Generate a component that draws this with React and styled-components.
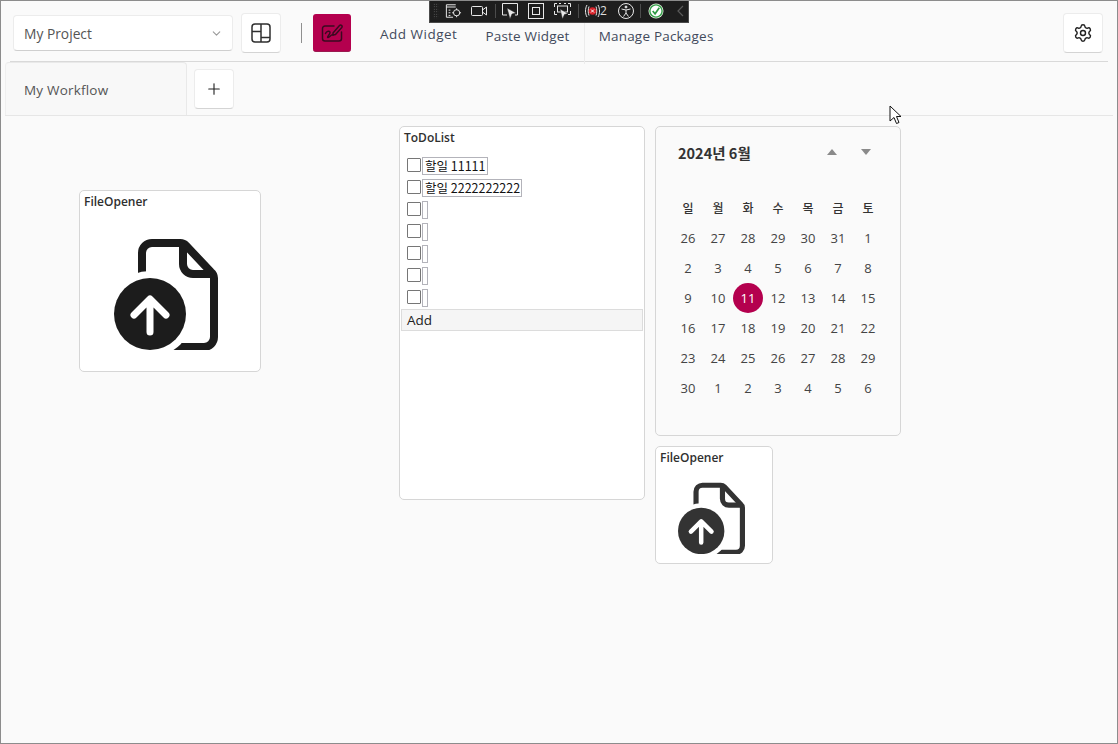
import styled, { createGlobalStyle } from "styled-components";
import { ChevronDown, Plus, Settings } from "lucide-react";

const GlobalStyle = createGlobalStyle`
  html, body {
    margin: 0;
    padding: 0;
    background: #fafafa;
  }
  * {
    box-sizing: border-box;
  }
`;

const FONT = `"Open Sans", "Noto Sans CJK KR", sans-serif`;
const PINK = "#b4004e";

const Page = styled.div`
  position: relative;
  width: 1118px;
  height: 744px;
  overflow: hidden;
  background: #fafafa;
  border: 1px solid #8c8c8c;
  font-family: ${FONT};
  color: #333;
`;

const Toolbar = styled.div`
  display: flex;
  align-items: flex-start;
  height: 61px;
  margin: 0 9px;
  padding: 12px 5px 0 3px;
  border-bottom: 1px solid #d9d9d9;
`;

const ProjectSelect = styled.div`
  display: flex;
  align-items: center;
  justify-content: space-between;
  width: 220px;
  height: 36px;
  margin-top: 2px;
  padding: 1px 9px 0 10px;
  background: #fff;
  border: 1px solid #ececec;
  border-bottom-color: #cfcfcf;
  border-radius: 4px;
  font-size: 13.8px;
  color: #555;
`;

const IconButton = styled.div`
  display: flex;
  align-items: center;
  justify-content: center;
  flex: none;
  width: 40px;
  height: 40px;
  margin-left: ${(p) => p.$ml || 0}px;
  background: #fff;
  border: 1px solid #ececec;
  border-bottom-color: #d4d4d4;
  border-radius: 4px;
  color: #222;
`;

const Separator = styled.div`
  width: 1px;
  height: 20px;
  margin: 10px 11px 0 20px;
  background: #8f8f8f;
`;

const PinkButton = styled.div`
  display: flex;
  align-items: center;
  justify-content: center;
  width: 38px;
  height: 38px;
  margin-top: 1px;
  background: ${PINK};
  border-radius: 3px;
  border-bottom: 1px solid #9a1a50;
`;

const MenuItem = styled.div`
  margin-left: ${(p) => p.$ml}px;
  padding-top: ${(p) => p.$top}px;
  font-size: 13.5px;
  line-height: 20px;
  letter-spacing: ${(p) => p.$ls || 0.2}px;
  color: #424a5c;
  white-space: nowrap;
`;

const MenuDivider = styled.div`
  width: 1px;
  height: 42px;
  margin: 9px 0 0 14px;
  background: #ececec;
`;

const Spacer = styled.div`
  flex: 1;
`;

const TabBar = styled.div`
  display: flex;
  align-items: flex-start;
  height: 54px;
  margin: 0 4px;
  border-bottom: 1px solid #e6e6e6;
`;

const Tab = styled.div`
  display: flex;
  align-items: center;
  width: 182px;
  height: 53px;
  padding: 2px 18px 0;
  background: #f8f8f8;
  border: 1px solid #e9e9e9;
  border-bottom: 0;
  border-radius: 4px 4px 0 0;
  border-left-color: #efefef;
  font-size: 13.5px;
  letter-spacing: 0.2px;
  color: #555;
`;

const PlusButton = styled(IconButton)`
  margin-top: 7px;
  margin-left: 7px;
`;

const Canvas = styled.div`
  position: relative;
  height: 627px;
`;

/* widgets sit on a free canvas, so their place is the content */
const Widget = styled.div`
  position: absolute;
  left: ${(p) => p.$x}px;
  top: ${(p) => p.$y}px;
  width: ${(p) => p.$w}px;
  height: ${(p) => p.$h}px;
  background: ${(p) => p.$bg || "#fff"};
  border: 1px solid #d6d6d6;
  border-radius: 5px;
`;

const WidgetTitle = styled.div`
  padding: 3px 0 0 4px;
  font-size: 12px;
  line-height: 16px;
  font-weight: 600;
  color: #2f2f2f;
`;

const IconWrap = styled.div`
  display: flex;
  padding: ${(p) => p.$pad};
  color: ${(p) => p.$color};
`;

const TodoList = styled.div`
  display: flex;
  flex-direction: column;
  gap: 4px;
  padding: 11px 0 0 7px;
`;

const TodoRow = styled.div`
  display: flex;
  align-items: flex-start;
  height: 18px;
`;

const CheckBox = styled.div`
  flex: none;
  width: 14px;
  height: 14px;
  margin: 1px 1px 0 0;
  background: #fff;
  border: 1px solid #767676;
  border-radius: 1px;
`;

const TodoInput = styled.div`
  height: 18px;
  min-width: 6px;
  padding: 0 1px 0 2px;
  border: 1px solid #b3b3ba;
  font-family: "Noto Sans CJK KR", "Open Sans", sans-serif;
  font-size: 12.5px;
  line-height: 16px;
  color: #111;
  white-space: nowrap;
`;

const AddButton = styled.div`
  height: 22px;
  margin: 2px 1px 0 1px;
  padding-left: 5px;
  background: #f5f5f5;
  border: 1px solid #dcdcdc;
  font-size: 13.5px;
  line-height: 20px;
  color: #222;
`;

const CalHeader = styled.div`
  display: flex;
  align-items: center;
  height: 20px;
  margin: 15px 0 0 22px;
  font-family: "Noto Sans CJK KR", "Open Sans", sans-serif;
  font-size: 14.5px;
  font-weight: 700;
  color: #333;
`;

const CalNav = styled.div`
  display: flex;
  gap: 24px;
  margin-left: 76px;
`;

const Triangle = styled.div`
  width: 0;
  height: 0;
  border-left: 5px solid transparent;
  border-right: 5px solid transparent;
  ${(p) => (p.$up ? "border-bottom" : "border-top")}: 6px solid #8a8a8a;
`;

const CalGrid = styled.div`
  display: grid;
  grid-template-columns: repeat(7, 30px);
  grid-auto-rows: 30px;
  margin: 31px 0 0 17px;
`;

const DayHead = styled.div`
  display: flex;
  align-items: center;
  justify-content: center;
  padding-bottom: 2px;
  font-family: "Noto Sans CJK KR", "Open Sans", sans-serif;
  font-size: 12px;
  font-weight: 500;
  color: #333;
`;

const Day = styled.div`
  display: flex;
  align-items: center;
  justify-content: center;
  font-size: 13px;
  color: ${(p) => (p.$on ? "#fff" : "#444")};
  background: ${(p) => (p.$on ? PINK : "transparent")};
  border-radius: 50%;
`;

/* remote debug bar floating on top of the app */
const DebugBar = styled.div`
  position: absolute;
  left: 428px;
  top: -1px;
  display: flex;
  align-items: center;
  width: 260px;
  height: 23px;
  background: #1e1e1e;
  border: 1px solid #4a4a4a;
  border-top: 0;
  color: #e8e8e8;
`;

const Grip = styled.div`
  flex: none;
  width: 6px;
  height: 16px;
  margin: 0 6px 0 3px;
  background: radial-gradient(circle, #6a6a6a 0.6px, transparent 0.8px) 0 0 / 2.5px 2.5px;
`;

const DebugIcon = styled.svg`
  display: block;
  flex: none;
  margin-left: ${(p) => p.$ml || 0}px;
`;

const DebugSep = styled.div`
  flex: none;
  width: 1px;
  height: 14px;
  margin: 0 ${(p) => p.$mr}px 0 ${(p) => p.$ml}px;
  background: #4c4c4c;
`;

const DebugCount = styled.span`
  flex: none;
  font-size: 12px;
  line-height: 1;
  color: #ddd;
`;

const Cursor = styled.svg`
  position: absolute;
  left: 888px;
  top: 104px;
`;

const FileUpIcon = ({ size }) => (
  <svg width={size} height={size * 1.077} viewBox="0 0 104 112" fill="none">
    <path
      d="M28 42V15a10 10 0 0 1 10-10h28a8 8 0 0 1 6 2.500l25 26.500a8 8 0 0 1 3 6v59a10 10 0 0 1-10 10H56"
      stroke="currentColor"
      strokeWidth="8"
      strokeLinejoin="round"
    />
    <path
      d="M69 5v21a10 10 0 0 0 10 10h21"
      stroke="currentColor"
      strokeWidth="8"
    />
    <circle cx="36" cy="76" r="43" fill="#fff" />
    <circle cx="36" cy="76" r="36" fill="currentColor" />
    <path
      d="M36 94V62M20 77l16-16 16 16"
      stroke="#fff"
      strokeWidth="7"
      strokeLinecap="round"
      strokeLinejoin="round"
    />
  </svg>
);

const LayoutIcon = () => (
  <svg width="20" height="20" viewBox="0 0 20 20" fill="none" stroke="#2f2f2f" strokeWidth="1.5">
    <rect x="1" y="1" width="18" height="18" rx="3" />
    <path d="M10 1v18M1 8.500h9M10 14.500h9" />
  </svg>
);

const PenBoardIcon = () => (
  <svg width="22" height="20" viewBox="0 0 22 20" fill="none" stroke="#3a0a20" strokeWidth="1.5" strokeLinecap="round" strokeLinejoin="round">
    <path d="M13 3H4a2.500 2.500 0 0 0-2.500 2.500v10A2.500 2.500 0 0 0 4 18h14a2.500 2.500 0 0 0 2.500-2.500V9" />
    <path d="M12 10l6.500-7.500a1.500 1.500 0 0 1 2.300 1.900L14.500 11.500 12 12z" />
    <path d="M4.500 10.500c1-2.500 4.500-3 4.500-1s-3.500 4.500-2 5 3-3.500 5-2.500" />
  </svg>
);

const InspectIcon = () => (
  <DebugIcon width="17" height="16" viewBox="0 0 19 18" fill="none" stroke="#e8e8e8" strokeWidth="1.100">
    <path d="M12 2H1.500v14H9M1.500 4.500H12" />
    <path d="M4 8h2M4 11h2M4 14h2" />
    <circle cx="13" cy="11" r="3.500" />
    <path d="M13 6v2M13 14v2M8 11h2M16 11h2" />
  </DebugIcon>
);

const CameraIcon = () => (
  <DebugIcon $ml={9} width="17" height="12" viewBox="0 0 17 12" fill="none" stroke="#e8e8e8" strokeWidth="1">
    <rect x="0.500" y="1.500" width="11" height="9" rx="1" />
    <path d="M11.500 5l4-3v8l-4-3" />
  </DebugIcon>
);

const SelectIcon = () => (
  <DebugIcon width="16" height="17" viewBox="0 0 16 17" fill="none">
    <path d="M5 12H.5V.5h15V12H13" stroke="#e8e8e8" />
    <path d="M5 5l9 5-4 1-2 5z" fill="#e8e8e8" stroke="#1e1e1e" strokeWidth="0.500" />
  </DebugIcon>
);

const FrameIcon = () => (
  <DebugIcon $ml={10} width="16" height="16" viewBox="0 0 16 16" fill="none" stroke="#e8e8e8">
    <rect x="0.500" y="0.500" width="15" height="15" />
    <rect x="4.500" y="4.500" width="7" height="7" />
  </DebugIcon>
);

const ScanIcon = () => (
  <DebugIcon $ml={10} width="17" height="17" viewBox="0 0 17 17" fill="none">
    <path d="M3 .5H.5V4M14 .5h2.500V4M.5 8v3.500H3M16.500 8v3.500H14M5 .5h2M10 .5h2" stroke="#e8e8e8" />
    <rect x="3.500" y="3" width="10" height="6" stroke="#e8e8e8" />
    <path d="M6 6l8 4.500-3.500 1-2 4.500z" fill="#e8e8e8" stroke="#1e1e1e" strokeWidth="0.500" />
  </DebugIcon>
);

const LiveIcon = () => (
  <DebugIcon width="15" height="16" viewBox="0 0 15 16" fill="none">
    <path d="M2 2C0 5.500 0 10.500 2 14M13 2c2 3.500 2 8.500 0 12M4 3.500C3 6 3 10 4 12.500M11 3.500c1 2.500 1 6.500 0 9" stroke="#e8e8e8" />
    <circle cx="7.500" cy="8" r="3.800" fill="#d8232a" />
    <path d="M6 6.500l3 3M9 6.500l-3 3" stroke="#fff" />
  </DebugIcon>
);

const AccessIcon = () => (
  <DebugIcon $ml={11} width="16" height="16" viewBox="0 0 16 16" fill="none" stroke="#e8e8e8">
    <circle cx="8" cy="8" r="7.500" />
    <circle cx="8" cy="4" r="1" fill="#e8e8e8" />
    <path d="M3.500 6l4.500 1 4.500-1M8 7v3l-2.500 3.500M8 10l2.500 3.500" />
  </DebugIcon>
);

const OkIcon = () => (
  <DebugIcon width="16" height="16" viewBox="0 0 17 17" fill="none">
    <circle cx="8.500" cy="8.500" r="8" fill="#e6efe0" />
    <circle cx="8.500" cy="8.500" r="6.500" fill="#fff" stroke="#35a04a" strokeWidth="1.500" />
    <path d="M5 8.500l2.500 3L12 5" stroke="#2f9a44" strokeWidth="1.800" />
  </DebugIcon>
);

const BackIcon = () => (
  <DebugIcon $ml={13} width="7" height="12" viewBox="0 0 7 12" fill="none" stroke="#5a5a5a" strokeWidth="1.200">
    <path d="M6 1L1 6l5 5" />
  </DebugIcon>
);

const DAY_NAMES = ["일", "월", "화", "수", "목", "금", "토"];
const DAYS = [
  26, 27, 28, 29, 30, 31, 1,
  2, 3, 4, 5, 6, 7, 8,
  9, 10, 11, 12, 13, 14, 15,
  16, 17, 18, 19, 20, 21, 22,
  23, 24, 25, 26, 27, 28, 29,
  30, 1, 2, 3, 4, 5, 6,
];
const TODOS = ["할일 11111", "할일 2222222222", "", "", "", "", ""];

export default function App() {
  return (
    <Page>
      <GlobalStyle />
      <Toolbar>
        <ProjectSelect>
          My Project
          <ChevronDown size={13} color="#9a9a9a" />
        </ProjectSelect>
        <IconButton $ml={8}>
          <LayoutIcon />
        </IconButton>
        <Separator />
        <PinkButton>
          <PenBoardIcon />
        </PinkButton>
        <MenuItem $ml={29} $top={11} $ls={0.5}>Add Widget</MenuItem>
        <MenuItem $ml={28} $top={13}>Paste Widget</MenuItem>
        <MenuDivider />
        <MenuItem $ml={14} $top={13}>Manage Packages</MenuItem>
        <Spacer />
        <IconButton>
          <Settings size={20} strokeWidth={1.7} />
        </IconButton>
      </Toolbar>
      <TabBar>
        <Tab>My Workflow</Tab>
        <PlusButton>
          <Plus size={18} strokeWidth={1.5} />
        </PlusButton>
      </TabBar>
      <Canvas>
        <Widget $x={78} $y={74} $w={182} $h={182}>
          <WidgetTitle>FileOpener</WidgetTitle>
          <IconWrap $pad="28px 0 0 34px" $color="#1c1c1c">
            <FileUpIcon size={104} />
          </IconWrap>
        </Widget>
        <Widget $x={398} $y={10} $w={246} $h={374}>
          <WidgetTitle>ToDoList</WidgetTitle>
          <TodoList>
            {TODOS.map((t, i) => (
              <TodoRow key={i}>
                <CheckBox />
                <TodoInput>{t}</TodoInput>
              </TodoRow>
            ))}
          </TodoList>
          <AddButton>Add</AddButton>
        </Widget>
        <Widget $x={654} $y={10} $w={246} $h={310} $bg="#fafafa">
          <CalHeader>
            2024년 6월
            <CalNav>
              <Triangle $up />
              <Triangle />
            </CalNav>
          </CalHeader>
          <CalGrid>
            {DAY_NAMES.map((d) => (
              <DayHead key={d}>{d}</DayHead>
            ))}
            {DAYS.map((d, i) => (
              <Day key={i} $on={i === 16}>{d}</Day>
            ))}
          </CalGrid>
        </Widget>
        <Widget $x={654} $y={330} $w={118} $h={118}>
          <WidgetTitle>FileOpener</WidgetTitle>
          <IconWrap $pad="16px 0 0 22px" $color="#333">
            <FileUpIcon size={67} />
          </IconWrap>
        </Widget>
      </Canvas>
      <DebugBar>
        <Grip />
        <InspectIcon />
        <CameraIcon />
        <DebugSep $ml={7} $mr={6} />
        <SelectIcon />
        <FrameIcon />
        <ScanIcon />
        <DebugSep $ml={7} $mr={6} />
        <LiveIcon />
        <DebugCount>2</DebugCount>
        <AccessIcon />
        <DebugSep $ml={6} $mr={7} />
        <OkIcon />
        <BackIcon />
      </DebugBar>
      <Cursor width="14" height="20" viewBox="0 0 14 20">
        <path d="M1 1v15l4-3.500 2.500 6 2.500-1-2.500-6H12z" fill="#fff" stroke="#111" strokeWidth="1" />
      </Cursor>
    </Page>
  );
}
